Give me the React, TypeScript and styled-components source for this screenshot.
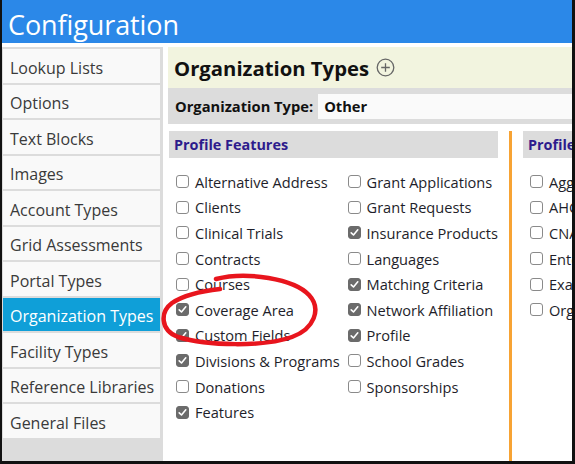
import React from 'react';
import styled, { createGlobalStyle } from 'styled-components';

const GlobalStyle = createGlobalStyle`
  html, body {
    margin: 0;
    padding: 0;
    background: #ffffff;
  }
  body {
    font-family: "Open Sans", "Noto Sans", "Liberation Sans", sans-serif;
  }
`;

const Frame = styled.div`
  position: relative;
  width: 575px;
  height: 464px;
  box-sizing: border-box;
  border-left: 2px solid #111;
  border-right: 3px solid #111;
  border-bottom: 3px solid #111;
  display: flex;
  flex-direction: column;
  overflow: hidden;
  background: #fff;
`;

const TitleBar = styled.div`
  height: 43px;
  box-sizing: border-box;
  flex-shrink: 0;
  background: #2b88e8;
  color: #fff;
  font-size: 27px;
  line-height: 43px;
  padding: 3px 0 0 6px;
  letter-spacing: -0.1px;
`;

const Body = styled.div`
  flex: 1;
  display: flex;
  gap: 5px;
  padding-top: 4px;
  min-height: 0;
`;

const Sidebar = styled.nav`
  width: 161px;
  flex-shrink: 0;
  box-sizing: border-box;
  background: #dcdcdc;
  padding: 2px 3px 0 1px;
  display: flex;
  flex-direction: column;
  gap: 2px;
`;

const NavItem = styled.div<{ $active?: boolean }>`
  height: 33.5px;
  box-sizing: border-box;
  display: flex;
  align-items: center;
  padding: 4px 0 0 7px;
  font-size: 16px;
  color: ${p => (p.$active ? '#ffffff' : '#3a3a3a')};
  background: ${p => (p.$active ? '#0f9fd8' : '#f9f9f9')};
  white-space: nowrap;
`;

const Main = styled.main`
  flex: 1;
  display: flex;
  flex-direction: column;
  min-width: 0;
  overflow: hidden;
`;

const Header = styled.div`
  height: 41px;
  flex-shrink: 0;
  background: #f2f4df;
  display: flex;
  align-items: center;
  gap: 7px;
  padding-left: 6px;
  font-size: 20.3px;
  font-weight: 700;
  color: #111;
`;

const TypeRow = styled.div`
  height: 36px;
  flex-shrink: 0;
  background: #dcdcdc;
  display: flex;
  align-items: center;
  padding-left: 7px;
  gap: 5px;
  font-size: 14.7px;
  font-weight: 700;
  color: #111;
`;

const TypeInput = styled.div`
  flex: 1;
  height: 25px;
  background: #fafafa;
  display: flex;
  align-items: center;
  padding-left: 6px;
  font-size: 14.7px;
  font-weight: 700;
  color: #111;
`;

const Sections = styled.div`
  flex: 1;
  display: flex;
  padding-top: 7px;
  padding-left: 1px;
  min-height: 0;
`;

const Section = styled.section<{ $width?: number }>`
  width: ${p => (p.$width ? `${p.$width}px` : 'auto')};
  flex: ${p => (p.$width ? '0 0 auto' : '1')};
  min-width: 0;
  white-space: nowrap;
`;

const SectionTitle = styled.div`
  height: 27px;
  background: #dcdcdc;
  display: flex;
  align-items: center;
  padding-left: 5px;
  font-size: 14.4px;
  font-weight: 700;
  color: #2d1b8c;
`;

const Divider = styled.div`
  width: 3px;
  background: #f7a334;
  margin: 0 11px;
  flex-shrink: 0;
`;

const Columns = styled.div<{ $pad: number }>`
  display: flex;
  padding-top: 11px;
  padding-left: ${p => p.$pad}px;
`;

const Column = styled.div<{ $width?: number }>`
  width: ${p => (p.$width ? `${p.$width}px` : 'auto')};
  display: flex;
  flex-direction: column;
`;

const Option = styled.label`
  height: 25.6px;
  display: flex;
  align-items: center;
  gap: 6px;
  font-size: 14.6px;
  color: #1e1e2a;
`;

const Box = styled.span<{ $checked?: boolean }>`
  width: 13px;
  height: 13px;
  box-sizing: border-box;
  border-radius: 3px;
  border: 1px solid ${p => (p.$checked ? '#6b6b6b' : '#8a8a8a')};
  background: ${p => (p.$checked ? '#6b6b6b' : '#ffffff')};
  display: flex;
  align-items: center;
  justify-content: center;
  flex-shrink: 0;
`;

const Annotation = styled.svg`
  position: absolute;
  left: 0;
  top: 0;
  pointer-events: none;
`;

const navItems = [
  'Lookup Lists',
  'Options',
  'Text Blocks',
  'Images',
  'Account Types',
  'Grid Assessments',
  'Portal Types',
  'Organization Types',
  'Facility Types',
  'Reference Libraries',
  'General Files',
];

type Feature = { label: string; checked?: boolean };

const col1: Feature[] = [
  { label: 'Alternative Address' },
  { label: 'Clients' },
  { label: 'Clinical Trials' },
  { label: 'Contracts' },
  { label: 'Courses' },
  { label: 'Coverage Area', checked: true },
  { label: 'Custom Fields', checked: true },
  { label: 'Divisions & Programs', checked: true },
  { label: 'Donations' },
  { label: 'Features', checked: true },
];

const col2: Feature[] = [
  { label: 'Grant Applications' },
  { label: 'Grant Requests' },
  { label: 'Insurance Products', checked: true },
  { label: 'Languages' },
  { label: 'Matching Criteria', checked: true },
  { label: 'Network Affiliation', checked: true },
  { label: 'Profile', checked: true },
  { label: 'School Grades' },
  { label: 'Sponsorships' },
];

const col3: Feature[] = [
  { label: 'Aggregates' },
  { label: 'AHCA Reports' },
  { label: 'CNA Tracking' },
  { label: 'Enterprise' },
  { label: 'Exams' },
  { label: 'Organization Notes' },
];

const Check = () => (
  <svg width="9" height="9" viewBox="0 0 9 9">
    <path d="M1.2 4.8 L3.5 7 L7.8 1.8" fill="none" stroke="#fff" strokeWidth="1.6" strokeLinecap="round" strokeLinejoin="round" />
  </svg>
);

const CheckOption = ({ label, checked }: Feature) => (
  <Option>
    <Box $checked={checked}>{checked && <Check />}</Box>
    {label}
  </Option>
);

const PlusCircle = () => (
  <svg width="19" height="19" viewBox="0 0 19 19">
    <circle cx="9.5" cy="9.5" r="8.3" fill="none" stroke="#666" strokeWidth="1.3" />
    <path d="M9.5 5.2 V13.8 M5.2 9.5 H13.8" stroke="#666" strokeWidth="1.3" />
  </svg>
);

const App: React.FC = () => {
  return (
    <>
      <GlobalStyle />
      <Frame>
        <TitleBar>Configuration</TitleBar>
        <Body>
          <Sidebar>
            {navItems.map(item => (
              <NavItem key={item} $active={item === 'Organization Types'}>
                {item}
              </NavItem>
            ))}
          </Sidebar>
          <Main>
            <Header>
              Organization Types <PlusCircle />
            </Header>
            <TypeRow>
              Organization Type:
              <TypeInput>Other</TypeInput>
            </TypeRow>
            <Sections>
              <Section $width={329}>
                <SectionTitle>Profile Features</SectionTitle>
                <Columns $pad={7}>
                  <Column $width={172}>
                    {col1.map(f => <CheckOption key={f.label} {...f} />)}
                  </Column>
                  <Column>
                    {col2.map(f => <CheckOption key={f.label} {...f} />)}
                  </Column>
                </Columns>
              </Section>
              <Divider />
              <Section>
                <SectionTitle>Profile Sections</SectionTitle>
                <Columns $pad={7}>
                  <Column>
                    {col3.map(f => <CheckOption key={f.label} {...f} />)}
                  </Column>
                </Columns>
              </Section>
            </Sections>
          </Main>
        </Body>
        <Annotation width="575" height="464" viewBox="0 0 575 464">
          <path
            d="M214 279 C245 271 292 279 307 295 C320 309 312 329 290 337 C262 347 205 346 176 337 C158 330 158 312 170 303 C182 295 200 291 218 289"
            fill="none"
            stroke="#e8151d"
            strokeWidth="4.5"
            strokeLinecap="round"
            strokeLinejoin="round"
          />
        </Annotation>
      </Frame>
    </>
  );
};

export default App;
